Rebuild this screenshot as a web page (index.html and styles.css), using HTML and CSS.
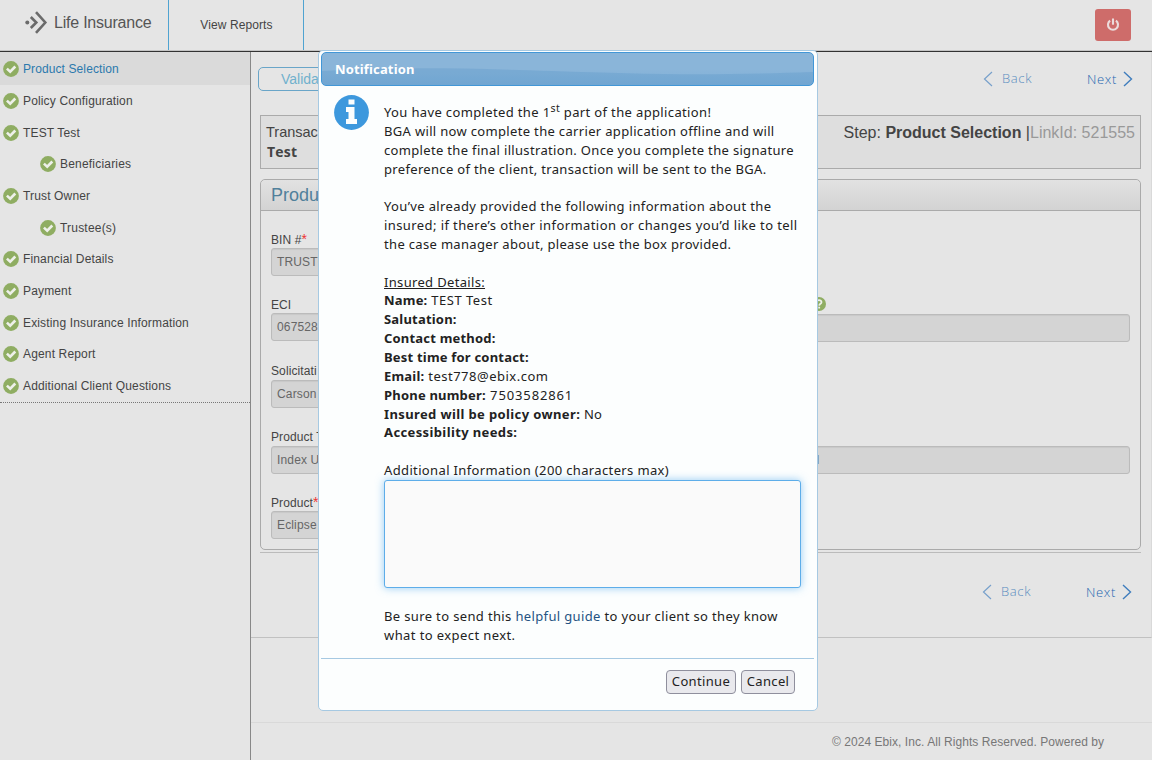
FILE: index.html
```html
<!DOCTYPE html>
<html lang="en">
<head>
<meta charset="utf-8">
<title>Life Insurance</title>
<link rel="stylesheet" href="styles.css">
</head>
<body>
<svg width="0" height="0" class="defs">
  <symbol id="check" viewBox="0 0 16 16"><circle cx="8" cy="8" r="7.9" fill="#8fad62"/><path d="M3.9 7.6 7.2 10.6 12.3 5.5" fill="none" stroke="#eef0ea" stroke-width="2.6"/></symbol>
  <symbol id="left" viewBox="0 0 10 16"><path d="M9 1 1.5 8 9 15" fill="none" stroke="#77a0cb" stroke-width="1.2"/></symbol>
  <symbol id="right" viewBox="0 0 10 16"><path d="M1 1 8.5 8 1 15" fill="none" stroke="#3f7dbd" stroke-width="1.4"/></symbol>
</svg>
<header class="top">
  <div class="brand">
    <svg class="logo" width="23" height="23" viewBox="0 0 23 23"><g fill="none" stroke="#6b6b6b" stroke-width="2.6"><path d="M11 1.2 20.3 11.5 11 21.8"/><path d="M5.8 6 11.3 11.5 5.8 17"/></g><circle cx="2.3" cy="11.5" r="2" fill="#6b6b6b"/></svg>
    <span class="brand-name">Life Insurance</span>
  </div>
  <div class="reports"><span>View Reports</span></div>
  <div class="power"><svg width="14" height="14" viewBox="0 0 14 14"><g fill="none" stroke="#ecdcdc" stroke-width="2.1"><path d="M4.1 2.7A5 5 0 1 0 9.9 2.7"/><path d="M7 .5V6.7"/></g></svg></div>
</header>
<div class="layout">
  <nav class="side">
    <a class="item active"><svg class="ck"><use href="#check"/></svg><span>Product Selection</span></a>
    <a class="item"><svg class="ck"><use href="#check"/></svg><span>Policy Configuration</span></a>
    <a class="item"><svg class="ck"><use href="#check"/></svg><span>TEST Test</span></a>
    <a class="item sub"><svg class="ck"><use href="#check"/></svg><span>Beneficiaries</span></a>
    <a class="item"><svg class="ck"><use href="#check"/></svg><span>Trust Owner</span></a>
    <a class="item sub"><svg class="ck"><use href="#check"/></svg><span>Trustee(s)</span></a>
    <a class="item"><svg class="ck"><use href="#check"/></svg><span>Financial Details</span></a>
    <a class="item"><svg class="ck"><use href="#check"/></svg><span>Payment</span></a>
    <a class="item"><svg class="ck"><use href="#check"/></svg><span>Existing Insurance Information</span></a>
    <a class="item"><svg class="ck"><use href="#check"/></svg><span>Agent Report</span></a>
    <a class="item"><svg class="ck"><use href="#check"/></svg><span>Additional Client Questions</span></a>
  </nav>
  <div class="main">
    <div class="content">
      <div class="tools">
        <div class="validate">Valida</div>
        <div class="pager"><svg class="arrow"><use href="#left"/></svg><span class="back">Back</span><span class="next">Next</span><svg class="arrow"><use href="#right"/></svg></div>
      </div>
      <div class="summary">
        <div class="tx"><span>Transac</span><b>Test</b></div>
        <div class="step"><span>Step: <b>Product Selection</b> |</span><span class="link">LinkId: 521555</span></div>
      </div>
      <section class="panel">
        <h2>Produ</h2>
        <div class="fields">
          <label class="r1">BIN #<i>*</i></label><div class="box half">TRUST<span>C</span></div>
          <label class="r2">ECI</label><div class="pair"><div class="box">067528</div><div class="box low"></div><svg class="help" width="14" height="14" viewBox="0 0 14 14"><circle cx="7" cy="7" r="7" fill="#8fad62"/><path d="M4.6 5.4C4.6 2.4 9.6 2.5 9.5 5.2 9.4 6.8 7.3 6.8 7.2 8.6M7.2 9.8V11.5" fill="none" stroke="#eef0ea" stroke-width="1.8"/></svg></div>
          <label class="r3">Solicitati</label><div class="box half">Carson</div>
          <label class="r4">Product T</label><div class="pair"><div class="box">Index U</div><div class="box tail">l</div></div>
          <label class="r5">Product<i>*</i></label><div class="box half">Eclipse</div>
        </div>
      </section>
      <div class="rule"></div>
      <div class="pager bottom"><svg class="arrow"><use href="#left"/></svg><span class="back">Back</span><span class="next">Next</span><svg class="arrow"><use href="#right"/></svg></div>
    </div>
    <footer><span>© 2024 Ebix, Inc. All Rights Reserved. Powered by</span></footer>
  </div>
</div>
<div class="dialog">
  <div class="title"><svg class="wave" width="491" height="32" viewBox="0 0 491 32" preserveAspectRatio="none"><path d="M0 18C70 14 140 15 230 18S380 23 491 19V32H0Z" fill="#3a82bf" fill-opacity=".2"/></svg><span>Notification</span></div>
  <div class="message">
    <svg class="info" width="35" height="35" viewBox="0 0 35 35"><circle cx="17.5" cy="17.5" r="17.4" fill="#3d98dd"/><path d="M14.5 4.5H20.5V9.5H14.5ZM12 12H20.5V24H23V29H12V24H14.5V17H12Z" fill="#fcfefe"/></svg>
    <div class="copy">
      <p class="first">You have completed the 1<sup>st</sup> part of the application!</p>
      <p>BGA will now complete the carrier application offline and will</p>
      <p>complete the final illustration. Once you complete the signature</p>
      <p>preference of the client, transaction will be sent to the BGA.</p>
      <p>&nbsp;</p>
      <p class="first">You’ve already provided the following information about the</p>
      <p class="wide">insured; if there’s other information or changes you’d like to tell</p>
      <p>the case manager about, please use the box provided.</p>
      <p>&nbsp;</p>
      <p><u>Insured Details:</u></p>
      <p class="value"><b>Name:</b> TEST Test</p>
      <p><b>Salutation:</b></p>
      <p><b>Contact method:</b></p>
      <p><b>Best time for contact:</b></p>
      <p class="value"><b>Email:</b> test778@ebix.com</p>
      <p class="digits"><b>Phone number:</b> 7503582861</p>
      <p class="loose"><b>Insured will be policy owner:</b> No</p>
      <p class="loose"><b>Accessibility needs:</b></p>
      <p>&nbsp;</p>
      <p class="first">Additional Information (200 characters max)</p>
      <textarea></textarea>
      <p class="first">Be sure to send this <a>helpful guide</a> to your client so they know</p>
      <p class="wide">what to expect next.</p>
    </div>
  </div>
  <div class="actions"><button class="go">Continue</button><button class="no">Cancel</button></div>
</div>
</body>
</html>
```
FILE: styles.css
```css
* { box-sizing: border-box; }
body { margin: 0; width: 1152px; height: 760px; overflow: hidden; position: relative; background: #e5e5e5; color: #444; font: 12px/16px "Liberation Sans", Arial, sans-serif; white-space: nowrap; }
svg { display: block; flex: none; }
.defs { position: absolute; }
.top { height: 52px; display: flex; border-bottom: 1px solid #333; box-shadow: inset 0 -1px #c4c4c4; }
.brand { width: 169px; height: 50px; border-right: 1px solid #4fa3d1; display: flex; padding: 11px 0 0 25px; }
.brand-name { margin: 2px 0 0 6px; font-size: 16px; line-height: 20px; letter-spacing: -.22px; color: #555; }
.reports { width: 135px; height: 50px; border-right: 1px solid #4fa3d1; text-align: center; line-height: 50px; font-size: 12px; letter-spacing: .1px; padding-left: 1px; }
.power { width: 36px; height: 32px; margin: 9px 21px 0 auto; border-radius: 3px; background: #ce6c6a; display: flex; align-items: center; justify-content: center; }
.layout { display: flex; height: 708px; }
.side { width: 251px; border-right: 1px solid #888; }
.item { display: flex; align-items: center; height: 31.7px; padding-left: 3px; gap: 4px; font-size: 12px; letter-spacing: .15px; }
.item.sub { padding-left: 40px; letter-spacing: .2px; }
.item.active { height: 33px; background: #dadada; color: #2b79ad; letter-spacing: .1px; }
.item:last-child { height: 32.7px; border-bottom: 1px dotted #777; }
.ck { width: 16px; height: 16px; }
.main { flex: 1; display: flex; flex-direction: column; }
.content { height: 586px; border-bottom: 1px solid #c1c1c1; border-right: 1px solid #d9d9d9; padding: 15px 10px 0 9px; }
.tools { display: flex; justify-content: space-between; height: 48px; margin-left: -2px; }
.validate { width: 120px; height: 24px; border: 1px solid #69a5c8; border-radius: 5px; padding-left: 22px; font-size: 14px; line-height: 22px; color: #71b1cd; }
.pager { display: flex; font: 300 13px/16px "Open Sans", sans-serif; letter-spacing: .65px; height: 16px; margin: 4px 8px 0 0; }
.arrow { width: 10px; height: 16px; }
.back { color: #5a8dc0; margin: -1px 0 0 9px; width: 85px; }
.next { color: #1c66b0; width: 36px; }
.summary { height: 54px; border: 1px solid #aaa; background: #dedede; display: flex; justify-content: space-between; padding: 7px 5px 0 5px; font-size: 16px; line-height: 20px; }
.tx { display: flex; flex-direction: column; font-size: 14.5px; margin-top: -1px; }
.tx b { font: bold 14px/20px "Open Sans", sans-serif; margin-left: 1px; letter-spacing: .2px; }
.link { color: #999; }
.panel { height: 371px; margin-top: 10px; border: 1px solid #aaa; border-radius: 5px; }
.panel h2 { margin: 0; height: 31px; border-bottom: 1px solid #aaa; padding: 5px 10px; font-size: 18px; font-weight: normal; line-height: 20px; color: #51809b; background: linear-gradient(#e2e2e2, #d3d3d3); border-radius: 5px 5px 0 0; }
.fields { padding: 0 10px; font-size: 12px; }
.fields label { display: block; height: 16px; letter-spacing: .1px; }
.fields i { color: #e33; font-style: normal; font-size: 14px; line-height: 0; }
.r1 { margin-top: 21px; } .r2 { margin-top: 21px; } .r3 { margin-top: 22px; } .r4 { margin-top: 21px; } .r5 { margin-top: 21px; }
.r3 + .box, .r4 + .pair { margin-top: 1px; }
.box { height: 28px; border: 1px solid #bbb; border-radius: 3px; background: #d4d4d4; color: #666; padding-left: 5px; line-height: 26px; box-shadow: inset 0 1px 1px #c8c8c8; letter-spacing: .15px; }
.half { width: 420px; }
.pair { display: grid; grid-template-columns: 1fr 1fr; gap: 20px; position: relative; }
.tail { padding-left: 105px; }
.low { position: relative; top: 1px; }
.help { position: absolute; left: 541px; top: -16px; }
.rule { height: 1px; background: #bbb; margin-top: 2px; }
.bottom { justify-content: flex-end; margin: 31px 9px 0 0; }
footer { margin-top: 84px; border-top: 1px solid #d9d9d9; padding: 11px 0 0 581px; color: #777; font-size: 12px; letter-spacing: .05px; }
.dialog { position: absolute; left: 318px; top: 50px; width: 500px; height: 661px; border: 1px solid #a6c9e2; border-radius: 5px; background: #fcfefe; color: #222; padding: 1px 2px; font: 13px/18.85px "Noto Sans", sans-serif; }
.title { height: 34px; width: 493px; border: 1px solid #4297d7; border-radius: 5px; background: linear-gradient(#8ab5d9 50%, #7fb0d8); position: relative; overflow: hidden; color: #fff; font-weight: bold; line-height: 33px; padding-left: 13px; }
.wave { position: absolute; left: 0; top: 0; }
.title span { position: relative; letter-spacing: .15px; }
.message { height: 573px; width: 493px; border-bottom: 1px solid #a6c9e2; display: flex; padding: 9px 0 0 13px; }
.info { margin-right: 15px; }
.copy { padding-top: 8px; width: 418px; letter-spacing: .33px; }
.copy p { margin: 0; height: 18.85px; }
.copy .first { letter-spacing: .36px; }
.copy .wide { letter-spacing: .41px; }
.copy .value { letter-spacing: .5px; }
.copy b { letter-spacing: .2px; }
.copy .digits { letter-spacing: .87px; }
.copy .loose b { letter-spacing: .38px; }
sup { font-size: 10.5px; line-height: 0; }
textarea { display: block; width: 417px; height: 108px; border: 1px solid #5dade9; border-radius: 3px; background: #fafafa; box-shadow: 0 0 8px rgba(82,168,236,.6); resize: none; margin: 0 0 19px; }
.copy a { color: #245382; }
.actions { display: flex; justify-content: flex-end; gap: 5px; padding: 11px 20px 0 0; }
button { height: 24px; border: 1px solid #8f8f9d; border-radius: 4px; background: #e9e9ed; color: #222; font: 13px/20px "Noto Sans", sans-serif; padding: 0 0 2px; letter-spacing: .35px; }
.go { width: 70px; } .no { width: 54px; }
```
